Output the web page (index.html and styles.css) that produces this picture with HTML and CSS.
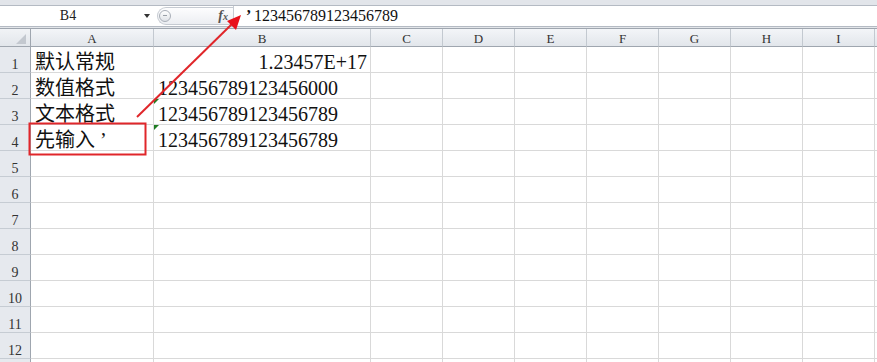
FILE: index.html
```html
<!DOCTYPE html>
<html lang="zh-CN">
<head>
<meta charset="UTF-8">
<meta name="viewport" content="width=device-width, initial-scale=1.0">
<title>数字格式</title>
<link rel="stylesheet" href="styles.css">
</head>
<body>
<div class="ribbon"></div>

<div class="fbar">
    <div class="namebox"><span class="name">B4</span><span class="drop"></span></div>
    <div class="split"><span class="knob"></span><span class="fx">f<i>x</i></span></div>
    <div class="formula"><span class="quote">’</span>123456789123456789</div>
</div>
<div class="gap"></div>

<div class="sheet">
    <div class="corner"></div><div class="ch">A</div><div class="ch">B</div><div class="ch">C</div><div class="ch">D</div><div class="ch">E</div><div class="ch">F</div><div class="ch">G</div><div class="ch">H</div><div class="ch">I</div><div class="ch"></div>

    <div class="rh">1</div><div>默认常规</div><div class="right">1.23457E+17</div><div></div><div></div><div></div><div></div><div></div><div></div><div></div><div></div>
    <div class="rh">2</div><div>数值格式</div><div>123456789123456000</div><div></div><div></div><div></div><div></div><div></div><div></div><div></div><div></div>
    <div class="rh">3</div><div>文本格式</div><div class="flag">123456789123456789</div><div></div><div></div><div></div><div></div><div></div><div></div><div></div><div></div>
    <div class="rh">4</div><div>先输入 ’</div><div class="flag">123456789123456789</div><div></div><div></div><div></div><div></div><div></div><div></div><div></div><div></div>
    <div class="rh">5</div><div></div><div></div><div></div><div></div><div></div><div></div><div></div><div></div><div></div><div></div>
    <div class="rh">6</div><div></div><div></div><div></div><div></div><div></div><div></div><div></div><div></div><div></div><div></div>
    <div class="rh">7</div><div></div><div></div><div></div><div></div><div></div><div></div><div></div><div></div><div></div><div></div>
    <div class="rh">8</div><div></div><div></div><div></div><div></div><div></div><div></div><div></div><div></div><div></div><div></div>
    <div class="rh">9</div><div></div><div></div><div></div><div></div><div></div><div></div><div></div><div></div><div></div><div></div>
    <div class="rh">10</div><div></div><div></div><div></div><div></div><div></div><div></div><div></div><div></div><div></div><div></div>
    <div class="rh">11</div><div></div><div></div><div></div><div></div><div></div><div></div><div></div><div></div><div></div><div></div>
    <div class="rh">12</div><div></div><div></div><div></div><div></div><div></div><div></div><div></div><div></div><div></div><div></div>
    <div class="rh"></div><div></div><div></div><div></div><div></div><div></div><div></div><div></div><div></div><div></div><div></div>
</div>

<!-- red annotation: box round A4 and arrow to the formula bar -->
<svg class="marks" width="877" height="362" viewBox="0 0 877 362">
    <rect x="29.5" y="123.5" width="116" height="31" fill="none" stroke="#e0262a" stroke-width="2"/>
    <line x1="137" y1="117" x2="233" y2="23" stroke="#e0262a" stroke-width="2"/>
    <polygon points="241,15 236,30 227,21" fill="#e8121c"/>
</svg>
</body>
</html>
```

FILE: styles.css
```css
body {
    margin: 0;
    padding: 0;
    width: 877px;
    height: 362px;
    overflow: hidden;
    position: relative;
    background-color: #fff;
    font-family: 'Liberation Serif', 'Noto Sans CJK SC', serif;
    color: #111;
}

.ribbon {
    height: 5px;
    background-color: #e2e5ea;
    border-bottom: 1px solid #b4bac3;
}

.fbar {
    display: flex;
    height: 20px;
    background-color: #fff;
    border-bottom: 1px solid #b4bac3;
}

.namebox {
    width: 157px;
    display: flex;
    align-items: center;
}

.name {
    width: 136px;
    text-align: center;
    font-size: 14px;
    line-height: 20px;
    color: #222;
}

.drop {
    margin-left: 8px;
    width: 0;
    height: 0;
    border-left: 3.5px solid transparent;
    border-right: 3.5px solid transparent;
    border-top: 4px solid #333;
}

.split {
    width: 76px;
    height: 18px;
    margin-top: 1px;
    box-sizing: border-box;
    border: 1px solid #c6cbd2;
    border-right: none;
    border-radius: 9px 0 0 9px;
    background: linear-gradient(#fdfdfe, #eceef2);
    display: flex;
    align-items: center;
}

.knob {
    position: relative;
    width: 12px;
    height: 12px;
    margin-left: 1px;
    box-sizing: border-box;
    border: 1px solid #a9afb8;
    border-radius: 50%;
    background: linear-gradient(#ffffff, #dfe2e7);
}

.knob::after {
    content: '';
    position: absolute;
    left: 3px;
    top: 4px;
    width: 4px;
    height: 1px;
    background-color: #9aa0a8;
}

.fx {
    margin-left: auto;
    margin-right: 5px;
    font-size: 14px;
    font-style: italic;
    font-weight: bold;
    color: #555;
    line-height: 16px;
}

.fx i {
    font-size: 10px;
}

.formula {
    flex: 1;
    border-left: 1px solid #c6cbd2;
    padding-left: 12px;
    font-size: 16px;
    line-height: 20px;
    color: #111;
    white-space: nowrap;
}

.quote {
    display: inline-block;
    width: 8px;
    font-weight: bold;
}

.gap {
    height: 1px;
    background-color: #e3e6ea;
}

.sheet {
    display: grid;
    grid-template-columns: 31px 123px 217px repeat(8, 72px);
    grid-template-rows: 18px;
    grid-auto-rows: 26px;
    border-top: 1px solid #9fa6af;
}

.sheet > div {
    position: relative;
    box-sizing: border-box;
    border-right: 1px solid #d9d9d9;
    border-bottom: 1px solid #d9d9d9;
    padding: 0 3px 0 4px;
    display: flex;
    align-items: flex-end;
    font-size: 20px;
    line-height: 20px;
    white-space: pre;
    overflow: hidden;
}

.sheet > div.right {
    justify-content: flex-end;
}

.sheet > div.flag {
    overflow: visible;
}

.flag::before {
    content: '';
    position: absolute;
    left: 0;
    top: 0;
    width: 0;
    height: 0;
    border-top: 5px solid #1f7d22;
    border-right: 5px solid transparent;
}

.sheet > .corner {
    background: linear-gradient(#f1f3f6, #e2e6eb);
    border-right: 1px solid #9fa6af;
    border-bottom: 1px solid #9fa6af;
}

.corner::after {
    content: '';
    position: absolute;
    right: 4px;
    bottom: 2px;
    width: 10px;
    height: 10px;
    background-color: #c3c8cf;
    clip-path: polygon(100% 0, 100% 100%, 0 100%);
}

.sheet > .ch {
    background: linear-gradient(#f3f5f8, #e2e6eb);
    border-right: 1px solid #c3c9d0;
    border-bottom: 1px solid #9fa6af;
    justify-content: center;
    align-items: center;
    padding: 2px 0 0 0;
    font-size: 13px;
    line-height: 14px;
    color: #333;
}

.sheet > .rh {
    background-color: #e6e9ee;
    border-right: 1px solid #9fa6af;
    border-bottom: 1px solid #c6ccd3;
    justify-content: center;
    padding: 0;
    font-size: 14px;
    line-height: 14px;
    color: #333;
}

.marks {
    position: absolute;
    left: 0;
    top: 0;
    pointer-events: none;
}
```
